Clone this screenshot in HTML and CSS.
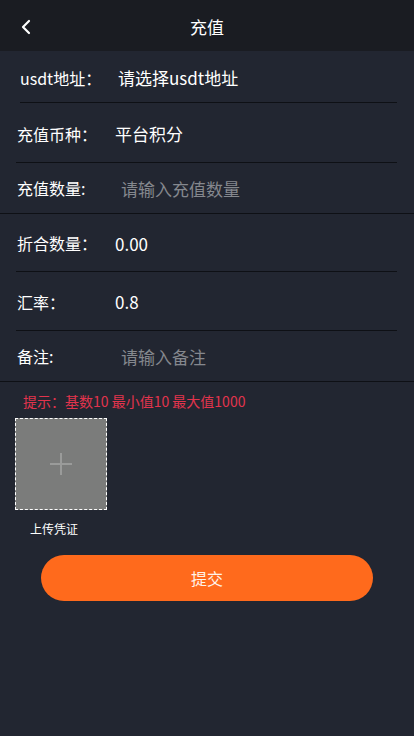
FILE: index.html
```html
<!DOCTYPE html>
<html lang="zh">
<head>
<meta charset="utf-8">
<title>充值</title>
<link rel="stylesheet" href="styles.css">
</head>
<body>
<div class="page">
  <header class="topbar">
    <span class="back">
      <svg width="12" height="16" viewBox="0 0 12 16"><path d="M9 2 L3 8 L9 14" fill="none" stroke="#fff" stroke-width="2.2" stroke-linecap="round" stroke-linejoin="round"/></svg>
    </span>
    <h1 class="title">充值</h1>
  </header>
  <div class="form">
    <div class="row r1 inset"><span class="label">usdt地址：</span><span class="value">请选择usdt地址</span></div>
    <div class="row r2 inset"><span class="label">充值币种：</span><span class="value">平台积分</span></div>
    <div class="row r3 full"><span class="label">充值数量:</span><span class="ph">请输入充值数量</span></div>
    <div class="row r4 inset"><span class="label">折合数量：</span><span class="value">0.00</span></div>
    <div class="row r5 inset"><span class="label">汇率：</span><span class="value">0.8</span></div>
    <div class="row r6 full"><span class="label">备注:</span><span class="ph">请输入备注</span></div>
  </div>
  <p class="hint">提示：基数10 最小值10 最大值1000</p>
  <div class="upload">
    <div class="upbox">
      <svg width="26" height="26" viewBox="0 0 26 26"><path d="M13 2 V24 M2 13 H24" stroke="#9a9b9a" stroke-width="2"/></svg>
    </div>
    <div class="uplabel">上传凭证</div>
  </div>
  <div class="btnwrap"><button class="submit">提交</button></div>
</div>
</body>
</html>
```
FILE: styles.css
```css
* { box-sizing: border-box; margin: 0; padding: 0; }
html, body { background: #222631; }
body {
  font-family: "Noto Sans CJK SC", "Noto Sans", sans-serif;
  color: #fff;
  width: 414px;
  min-height: 736px;
}
.page { min-height: 736px; background: #222631; }
.topbar {
  height: 51px;
  background: #1a1c22;
  display: flex;
  align-items: center;
  justify-content: center;
  position: relative;
}
.back { position: absolute; left: 20px; top: 19px; display: flex; }
.title { font-size: 17px; font-weight: normal; color: #fff; margin-top: 2px; }
.form { display: flex; flex-direction: column; }
.row {
  display: flex;
  align-items: center;
  padding-left: 17px;
  font-size: 16px;
  position: relative;
}
.row.inset::after {
  content: "";
  position: absolute;
  left: 16px; right: 17px; bottom: 0;
  height: 1px;
  background: #0e1015;
}
.row.full { border-bottom: 1px solid #0e1015; }
.r1 { height: 52px; padding-left: 20px; padding-top: 1px; }
.r1::after { left: 20px !important; }
.r2 { height: 60px; padding-top: 1px; }
.r3 { height: 51px; }
.r4 { height: 58px; }
.r5 { height: 59px; }
.r6 { height: 51px; }
.label { width: 98px; flex: none; color: #fff; }
.value { color: #fff; font-size: 17px; }
.ph { color: #85888e; padding-left: 6px; font-size: 17px; }
.hint {
  font-size: 14px;
  color: #e2344d;
  padding-left: 23px;
  margin-top: 10px;
  line-height: 19px;
}
.upload { padding-left: 15px; margin-top: 7px; width: 120px; }
.upbox {
  width: 92px; height: 92px;
  background: #7b7c7b;
  border: 1px dashed #ffffff;
  display: flex; align-items: center; justify-content: center;
}
.uplabel { font-size: 12px; color: #fff; margin-top: 10px; padding-left: 15px; }
.btnwrap { padding: 0 41px; margin-top: 18px; }
.submit {
  width: 332px; height: 46px;
  border: none;
  border-radius: 23px;
  background: #ff6a1c;
  color: #fff3ea;
  font-family: "Noto Sans CJK SC", sans-serif;
  font-size: 16px;
}
```
